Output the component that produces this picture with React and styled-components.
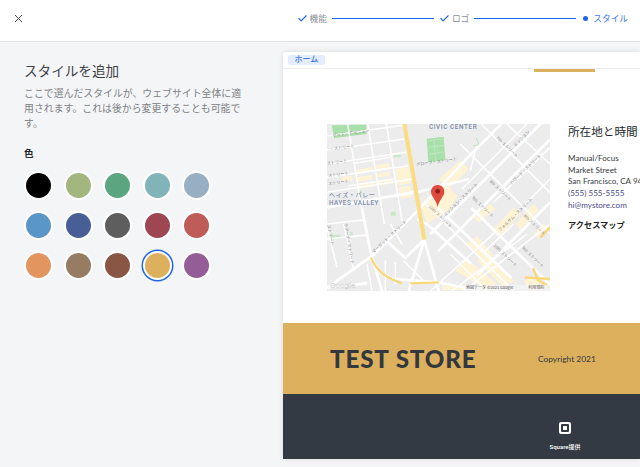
import React from "react";
import styled, { createGlobalStyle } from "styled-components";
import { FiX, FiCheck } from "react-icons/fi";

const Global = createGlobalStyle`
  html, body { margin: 0; padding: 0; background: #f4f5f7; }
  body { font-family: "Roboto", "Noto Sans CJK JP", sans-serif; width: 640px; height: 467px; overflow: hidden; }
`;

const Page = styled.div`
  width: 640px;
  height: 467px;
  display: flex;
  flex-direction: column;
  overflow: hidden;
`;

const Header = styled.header`
  flex: none;
  height: 37px;
  background: #fff;
  border-bottom: 1px solid #dfe1e3;
  display: flex;
  align-items: center;
  justify-content: space-between;
  padding: 0 12px 4px 12px;
`;

const Close = styled(FiX)`
  width: 13px;
  height: 13px;
  stroke-width: 1.8;
  color: #3c4146;
  display: block;
`;

const Steps = styled.div`
  display: flex;
  align-items: center;
`;

const Check = styled(FiCheck)`
  width: 11px;
  height: 11px;
  color: #1f66e5;
  stroke-width: 2.5;
  margin-right: 2px;
`;

const StepLabel = styled.span`
  font-size: 8.7px;
  line-height: 12px;
  color: ${(p) => (p.$active ? "#3f7be8" : "#8b8f94")};
`;

const StepLine = styled.span`
  width: 102px;
  height: 1px;
  background: #1f66e5;
  margin: 0 5px;
`;

const StepDot = styled.span`
  width: 5px;
  height: 5px;
  border-radius: 50%;
  background: #1f66e5;
  margin: 0 5px 0 2px;
`;

const Body = styled.div`
  flex: 1;
  display: flex;
  min-height: 0;
`;

const Side = styled.aside`
  width: 283px;
  flex: none;
  box-sizing: border-box;
  padding: 19px 24px 0 24px;
`;

const Title = styled.h1`
  margin: 0;
  font-size: 13.6px;
  line-height: 20px;
  font-weight: 400;
  color: #3c4146;
`;

const Desc = styled.p`
  margin: 5px 0 0;
  width: 226px;
  font-size: 9.9px;
  line-height: 15px;
  color: #7d8186;
`;

const ColorLabel = styled.div`
  margin-top: 16px;
  font-size: 9.5px;
  line-height: 14px;
  font-weight: 700;
  color: #25282b;
`;

const Swatches = styled.div`
  margin: 12px 0 0 2px;
  display: grid;
  grid-template-columns: repeat(5, 25px);
  column-gap: 14.5px;
  row-gap: 14.8px;
`;

const Swatch = styled.div`
  width: 25px;
  height: 25px;
  border-radius: 50%;
  background: ${(p) => p.$color};
  box-shadow: 0 0 0 2px #fff${(p) => (p.$selected ? ", 0 0 0 3.5px #1f66e5" : "")};
`;

const Preview = styled.main`
  flex: 1;
  margin-top: 10px;
  margin-bottom: 8px;
  background: #fff;
  border-top-left-radius: 3px;
  box-shadow: 0 0 5px rgba(0, 0, 0, 0.12);
  display: flex;
  flex-direction: column;
  min-width: 0;
  overflow: hidden;
`;

const TabBar = styled.div`
  height: 17px;
  flex: none;
  box-sizing: border-box;
  border-bottom: 1px solid #eceef0;
  padding: 3px 0 0 5px;
`;

const Tab = styled.span`
  display: inline-block;
  width: 37px;
  height: 10px;
  line-height: 10px;
  border-radius: 2px;
  background: #e4edfd;
  color: #3f7be8;
  font-size: 8px;
  font-weight: 500;
  text-align: center;
  vertical-align: top;
`;

const Content = styled.section`
  flex: 1;
  position: relative;
  display: flex;
  align-items: flex-start;
  padding: 55px 0 0 44px;
  min-height: 0;
`;

const Accent = styled.span`
  position: absolute;
  top: 0;
  left: 251px;
  width: 61px;
  height: 3px;
  background: #dcb05c;
`;

const MapFrame = styled.svg`
  width: 223px;
  height: 167px;
  flex: none;
  display: block;
`;

const Info = styled.div`
  margin-left: 18px;
  white-space: nowrap;
`;

const InfoTitle = styled.h2`
  margin: 0 0 13px;
  font-size: 11.6px;
  line-height: 16px;
  font-weight: 400;
  color: #25282b;
`;

const InfoLine = styled.div`
  font-size: 8.1px;
  line-height: 11.7px;
  font-family: "Lato", "Noto Sans CJK JP", sans-serif;
  color: ${(p) => p.$color || "#3a3d40"};
`;

const InfoLink = styled.div`
  margin-top: 7px;
  font-size: 8.2px;
  line-height: 12px;
  font-weight: 700;
  color: #1d1f22;
`;

const FooterStore = styled.div`
  height: 71px;
  flex: none;
  background: #dcb05c;
  display: flex;
  align-items: center;
  padding-left: 47px;
`;

const StoreName = styled.div`
  width: 208px;
  margin-top: -1px;
  font-family: "Lato", sans-serif;
  font-weight: 900;
  font-size: 24.2px;
  letter-spacing: 0.85px;
  color: #33383f;
  white-space: nowrap;
`;

const Copy = styled.div`
  font-family: "Lato", sans-serif;
  font-size: 8.4px;
  color: #33383f;
`;

const FooterDark = styled.div`
  height: 65px;
  flex: none;
  background: #333a44;
  display: flex;
  flex-direction: column;
  align-items: center;
  padding: 28px 0 0 207px;
  box-sizing: border-box;
`;

const SquareLogo = styled.svg`
  width: 12px;
  height: 12px;
  display: block;
`;

const Powered = styled.div`
  margin-top: 9px;
  font-size: 6px;
  line-height: 8px;
  font-weight: 500;
  color: #fff;
`;

const colors = [
  "#000000", "#a3b680", "#5ba680", "#80b4b9", "#98aec3",
  "#5b96c8", "#475f96", "#5e5e5e", "#9e4753", "#bf5c58",
  "#e2955f", "#957c63", "#895645", "#dcb05c", "#945d97",
];

// map is drawn in 3x coordinates, same as the zoomed reference crops
const minorRoads = [
  "M0 36L228 4", "M0 78L232 45", "M0 120L238 85", "M0 160L245 125", "M85 118L190 100",
  "M70 150L195 132", "M65 185L200 165", "M0 205L255 165", "M0 300L110 288", "M0 345L125 332",
  "M62 0L110 290", "M122 0L172 300", "M178 0L225 290", "M50 300L78 430", "M0 310L30 430",
  "M190 300L225 360", "M175 410V501", "M205 415V480", "M120 420L135 500",
  "M463 0L669 206", "M540 0L669 120", "M400 60L669 330", "M290 235L560 501", "M370 390L480 501",
  "M448 68L430 140", "M600 0L405 195", "M669 70L500 235", "M669 165L590 245", "M669 300L410 501",
  "M600 330L375 501", "M510 320L310 501", "M560 300L470 385", "M230 410L290 470",
];
const majorRoads = [
  "M0 492L140 392L270 262L423 100L523 0", "M669 -29L395 245L310 330", "M105 252L130 382L165 501",
  "M292 347L245 501", "M292 347L335 501", "M292 347L235 402L180 352", "M0 250L260 205", "M270 205L425 165",
  "M433 252L669 482", "M333 252L553 462", "M270 285L300 300L433 420", "M130 402L160 445L200 465L336 475L460 501",
  "M333 382L463 252L669 46", "M669 235L450 455", "M0 490L120 478",
];
const parkAreas = ["M14 4L118 2V30L22 42z", "M299 44L350 38L355 108L304 115z"];
const smallParks = ["M200 92h22v7h-22z", "M12 332h28v14H12z", "M70 323h7v12h-7z", "M192 263h14v12h-14z", "M97 198h6v25h-6z"];
const yellowBlocks = [
  "M88 138L135 128L137 142L90 152z", "M145 124L186 117L189 135L148 142z", "M90 160L135 152L138 165L93 173z", "M147 150L188 143L190 155L149 162z",
  "M95 182L140 175L142 188L97 195z", "M152 172L196 165L198 178L154 185z", "M45 160L75 155L77 168L47 173z", "M205 135L245 128L252 178L212 184z",
  "M215 190L250 185L255 218L222 225z", "M335 165L400 110L425 135L365 195z", "M280 240L350 175L392 215L365 260L300 300z",
  "M495 320L560 250L580 268L520 335z", "M565 300L620 240L635 258L580 318z", "M420 360L450 335L500 395L470 415z",
  "M385 440L420 405L510 480L485 501z", "M450 410L480 380L560 470L530 490z", "M590 470L625 458L665 490L610 501z", "M345 484H415V498H345z",
  "M620 330L650 298L662 310L632 342z", "M440 280L490 240L505 255L455 295z",
];
const strongYellow = [
  "M132 400C150 445 180 462 225 478", "M669 310L640 340", "M618 432L633 468L669 490", "M593 460L669 465", "M250 478L336 475",
];

const streets = [
  [268, 126, -8, "グローブ・ストリート"], [17, 40, -8, "ゲート・アベニュー"], [9, 80, -8, "・ストリート"], [0, 123, -8, "ストリート"],
  [4, 160, -8, "ストリート"], [4, 184, -8, "ストリート"], [140, 388, -43, "マーガット・ストリート"], [354, 278, -44, "ミッション・ストリート"],
  [304, 250, 44, "10th ストリート"], [434, 223, 44, "9th ストリート"], [487, 173, 44, "8th ストリート"], [507, 43, 44, "7th ストリート"],
  [554, 183, -44, "ハワード・ストリート"], [519, 323, -44, "フォルサム・ストリート"], [499, 366, 44, "10th ストリート"],
  [589, 276, 44, "8th ストリート"], [584, 373, 44, "9th ストリート"], [564, 68, -44, "ミッション"], [51, 298, 80, "ラグーナ・ストリート"], [1, 303, 80, "ストリート"],
];

function CityMap() {
  return (
    <MapFrame viewBox="0 0 669 501" preserveAspectRatio="none">
      <rect width="669" height="501" fill="#ececec" />
      {parkAreas.map((d) => (
        <path key={d} d={d} fill="#a9dfa9" />
      ))}
      <path d="M304 50L350 45M306 70L352 64M309 90L353 84M320 44L326 112" fill="none" stroke="#c9ecc9" strokeWidth="2" />
      {smallParks.map((d) => (
        <path key={d} d={d} fill="#c8e9c8" />
      ))}
      <path d="M438 65L458 62L470 50L483 35M455 62L448 40" fill="none" stroke="#bfe5bf" strokeWidth="3" />
      {yellowBlocks.map((d) => (
        <path key={d} d={d} fill="#fff3d6" />
      ))}
      <g fill="none" stroke="#fff">
        {minorRoads.map((d) => (
          <path key={d} d={d} strokeWidth="4.5" />
        ))}
        {majorRoads.map((d) => (
          <path key={d} d={d} strokeWidth="8" />
        ))}
      </g>
      <g fill="none" stroke="#f9d77a" strokeWidth="7">
        {strongYellow.map((d) => (
          <path key={d} d={d} />
        ))}
      </g>
      <path d="M232 0L292 347" fill="none" stroke="#fbdc80" strokeWidth="12" />
      <g fontFamily="'Noto Sans CJK JP', sans-serif" fontSize="12.5" fill="#808285">
        {streets.map(([x, y, r, t]) => (
          <text key={t + x} x={x} y={y} transform={`rotate(${r} ${x} ${y})`}>{t}</text>
        ))}
      </g>
      <g fontFamily="'Roboto', 'Noto Sans CJK JP', sans-serif" fontWeight="500" fill="#7d8dab">
        <text x="306" y="16" fontSize="19" letterSpacing="1.8">CIVIC CENTER</text>
        <text x="6" y="220" fontSize="18" letterSpacing="2">ヘイズ・バレー</text>
        <text x="6" y="243" fontSize="19" letterSpacing="1.6">HAYES VALLEY</text>
      </g>
      <text x="9" y="491" fontFamily="'Roboto', sans-serif" fontSize="24" fontWeight="500" fill="#f6f6f6" stroke="#c4c4c4" strokeWidth="0.8">Google</text>
      <rect x="414" y="483" width="255" height="18" fill="#f4f4f4" opacity="0.75" />
      <text x="417" y="496" fontFamily="'Noto Sans CJK JP', sans-serif" fontSize="12" fill="#555">地図データ ©2021 Google</text>
      <text x="604" y="496" fontFamily="'Noto Sans CJK JP', sans-serif" fontSize="12" fill="#555">利用規約</text>
      <path d="M332 183c-12 0-20 9-20 20 0 14 15 22 20 46 5-24 20-32 20-46 0-11-8-20-20-20z" fill="#dd4b3e" />
      <circle cx="332" cy="202" r="7" fill="#8a1f16" />
    </MapFrame>
  );
}

export default function App() {
  return (
    <Page>
      <Global />
      <Header>
        <Close />
        <Steps>
          <Check />
          <StepLabel>機能</StepLabel>
          <StepLine />
          <Check />
          <StepLabel>ロゴ</StepLabel>
          <StepLine />
          <StepDot />
          <StepLabel $active>スタイル</StepLabel>
        </Steps>
      </Header>
      <Body>
        <Side>
          <Title>スタイルを追加</Title>
          <Desc>ここで選んだスタイルが、ウェブサイト全体に適用されます。これは後から変更することも可能です。</Desc>
          <ColorLabel>色</ColorLabel>
          <Swatches>
            {colors.map((c, i) => (
              <Swatch key={c} $color={c} $selected={i === 13} />
            ))}
          </Swatches>
        </Side>
        <Preview>
          <TabBar>
            <Tab>ホーム</Tab>
          </TabBar>
          <Content>
            <Accent />
            <CityMap />
            <Info>
              <InfoTitle>所在地と時間</InfoTitle>
              <InfoLine>Manual/Focus</InfoLine>
              <InfoLine>Market Street</InfoLine>
              <InfoLine>San Francisco, CA 94103</InfoLine>
              <InfoLine $color="#4b4a8c">(555) 555-5555</InfoLine>
              <InfoLine $color="#4b4a8c">hi@mystore.com</InfoLine>
              <InfoLink>アクセスマップ</InfoLink>
            </Info>
          </Content>
          <FooterStore>
            <StoreName>TEST STORE</StoreName>
            <Copy>Copyright 2021</Copy>
          </FooterStore>
          <FooterDark>
            <SquareLogo viewBox="0 0 12 12">
              <path fillRule="evenodd" d="M2 0h8a2 2 0 0 1 2 2v8a2 2 0 0 1-2 2H2a2 2 0 0 1-2-2V2a2 2 0 0 1 2-2zM3 2a1 1 0 0 0-1 1v6a1 1 0 0 0 1 1h6a1 1 0 0 0 1-1V3a1 1 0 0 0-1-1zM4.5 4h3a.5.5 0 0 1 .5.5v3a.5.5 0 0 1-.5.5h-3a.5.5 0 0 1-.5-.5v-3a.5.5 0 0 1 .5-.5z" fill="#fff" />
            </SquareLogo>
            <Powered>Square提供</Powered>
          </FooterDark>
        </Preview>
      </Body>
    </Page>
  );
}
